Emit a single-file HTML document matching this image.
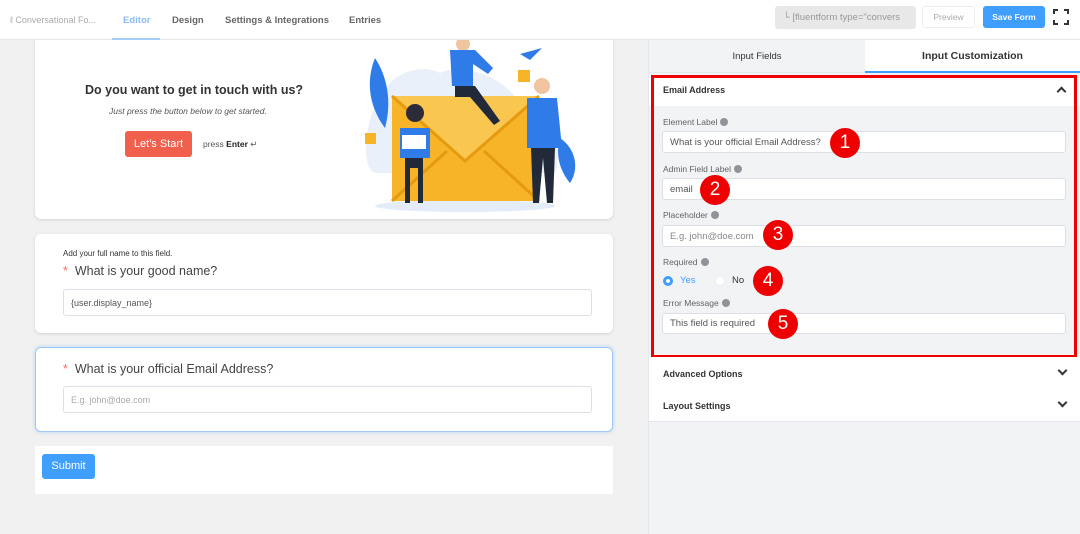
<!DOCTYPE html>
<html><head><style>
*{box-sizing:border-box;margin:0;padding:0}
body{width:1080px;height:534px;overflow:hidden;font-family:"Liberation Sans",sans-serif;background:#f1f1f1;position:relative;color:#333}
.abs{position:absolute}
.top{left:0;top:0;width:1080px;height:40px;background:#fff;border-bottom:1px solid #e4e7ed}
.nav{top:15px;font-size:9.5px;font-weight:bold;color:#666}
.card{background:#fff;border-radius:6px;box-shadow:0 1px 3px rgba(0,0,0,.12)}
.inp{background:#fff;border:1px solid #dcdfe6;border-radius:3px;font-size:9.5px;color:#555;padding-left:7px;display:flex;align-items:center}
.lbl{font-size:8.5px;color:#606266;left:663px}
.i{display:inline-block;width:8px;height:8px;border-radius:50%;background:#909399;vertical-align:-1px;margin-left:3px}
.num{width:30px;height:30px;border-radius:50%;background:#e00;color:#fff;font-size:19px;text-align:center;line-height:30px}
.row{left:649px;width:431px;height:33px;background:#fff;border-bottom:1px solid #e4e7ed;font-size:9px;font-weight:bold;color:#333;padding:12px 0 0 14px}
.chev{position:absolute;right:14px;top:10px;width:7px;height:7px;border-right:2px solid #333;border-bottom:2px solid #333;transform:rotate(45deg)}
</style></head><body>
<div class="abs card" style="left:35px;top:30px;width:578px;height:189px;border-radius:0 0 6px 6px"></div>
<div class="abs top"></div>
<div class="abs" style="left:10px;top:15px;font-size:9px;color:#aaa">&#x2113; Conversational Fo...</div>
<div class="abs nav" style="left:123px;color:#8bbcf0">Editor</div>
<div class="abs" style="left:112px;top:38px;width:48px;height:2px;background:#a6cdf5"></div>
<div class="abs nav" style="left:172px">Design</div>
<div class="abs nav" style="left:225px">Settings &amp; Integrations</div>
<div class="abs nav" style="left:349px">Entries</div>
<div class="abs" style="left:775px;top:6px;width:141px;height:23px;background:#e8e8e8;border-radius:3px;font-size:9.5px;color:#999;padding:6px 0 0 8px;white-space:nowrap;overflow:hidden">&#x2514; [fluentform type="convers</div>
<div class="abs" style="left:922px;top:6px;width:53px;height:22px;border:1px solid #eee;border-radius:3px;font-size:8.5px;color:#aaa;text-align:center;line-height:20px">Preview</div>
<div class="abs" style="left:983px;top:6px;width:62px;height:22px;background:#409eff;border-radius:3px;font-size:8.5px;font-weight:bold;color:#fff;text-align:center;line-height:22px">Save Form</div>
<svg class="abs" style="left:1053px;top:9px" width="16" height="16" viewBox="0 0 16 16" fill="none" stroke="#333" stroke-width="2"><path d="M1 5V1h4M11 1h4v4M15 11v4h-4M5 15H1v-4"/></svg>

<div class="abs" style="left:85px;top:83px;font-size:12.5px;font-weight:bold;color:#333">Do you want to get in touch with us?</div>
<div class="abs" style="left:109px;top:106px;font-size:8.5px;font-style:italic;color:#555">Just press the button below to get started.</div>
<div class="abs" style="left:125px;top:131px;width:67px;height:26px;background:#f0604d;border-radius:3px;color:#fff;font-size:11px;text-align:center;line-height:26px">Let's Start</div>
<div class="abs" style="left:203px;top:139px;font-size:8.5px;color:#555">press <b style="color:#222">Enter</b> &#x21B5;</div>
<svg class="abs" style="left:355px;top:40px" width="235" height="175" viewBox="0 2 235 175">
<ellipse cx="110" cy="168" rx="90" ry="6" fill="#e3ecf8"/>
<path d="M25 60c10-25 40-35 60-25 20-10 60 0 80 30 30 5 45 40 35 70H20C5 130 10 80 25 60z" fill="#e9f0fa"/>
<path d="M20 20c10 15 18 40 10 70-15-20-20-45-10-70z" fill="#2f7ce8"/>
<path d="M205 100c15 10 20 30 10 45-10-12-15-28-10-45z" fill="#2f7ce8"/>
<rect x="37" y="58" width="147" height="105" fill="#f7b428"/>
<path d="M37 58l73 65 74-65" fill="#f9c650" stroke="#e59a10" stroke-width="3"/>
<path d="M37 163l55-50M184 163l-55-50" stroke="#e59a10" stroke-width="3"/>
<circle cx="60" cy="75" r="9" fill="#2b2b3a"/>
<path d="M45 90h30v30H45z" fill="#2f7ce8"/><rect x="47" y="97" width="24" height="14" fill="#fff"/>
<path d="M50 120h18v45h-5v-35h-8v35h-5z" fill="#222a3a"/>
<circle cx="108" cy="6" r="7" fill="#f0c4a0"/>
<path d="M95 12h25l18 18-5 6-15-10v22H97z" fill="#2f7ce8"/>
<path d="M100 48h20l25 35-6 4-24-28-15 0z" fill="#222a3a"/>
<circle cx="187" cy="48" r="8" fill="#f0c4a0"/>
<path d="M172 60h30l5 50h-35z" fill="#2f7ce8"/>
<path d="M176 110h24l-2 55h-6l-4-45-4 45h-6z" fill="#222a3a"/>
<path d="M165 16l22-6-12 12z" fill="#2f7ce8"/>
<rect x="163" y="32" width="12" height="12" fill="#f7b428"/>
<rect x="10" y="95" width="11" height="11" fill="#f7b428"/>
</svg>

<div class="abs card" style="left:35px;top:234px;width:578px;height:99px"></div>
<div class="abs" style="left:63px;top:249px;font-size:8px;color:#333">Add your full name to this field.</div>
<div class="abs" style="left:63px;top:264px;font-size:12.5px;color:#444"><span style="color:#f56c6c">*</span>&nbsp; What is your good name?</div>
<div class="abs inp" style="left:63px;top:289px;width:529px;height:27px;font-size:9px">{user.display_name}</div>

<div class="abs card" style="left:35px;top:347px;width:578px;height:85px;border:1.5px solid #a0c8f5;box-shadow:0 0 4px rgba(64,158,255,.35)"></div>
<div class="abs" style="left:63px;top:362px;font-size:12.5px;color:#444"><span style="color:#f56c6c">*</span>&nbsp; What is your official Email Address?</div>
<div class="abs inp" style="left:63px;top:386px;width:529px;height:27px;font-size:9px;color:#aaa">E.g. john@doe.com</div>

<div class="abs" style="left:35px;top:446px;width:578px;height:48px;background:#fff"></div>
<div class="abs" style="left:42px;top:454px;width:53px;height:25px;background:#409eff;border-radius:3px;color:#fff;font-size:11px;text-align:center;line-height:25px">Submit</div>

<div class="abs" style="left:648px;top:40px;width:432px;height:494px;background:#f2f3f5;border-left:1px solid #e4e7ed"></div>
<div class="abs" style="left:649px;top:40px;width:216px;height:33px;font-size:9.5px;color:#333;text-align:center;line-height:33px;border-bottom:1px solid #e4e7ed">Input Fields</div>
<div class="abs" style="left:865px;top:40px;width:215px;height:33px;background:#fff;font-size:10.5px;font-weight:bold;color:#333;text-align:center;line-height:32px;border-bottom:2px solid #409eff">Input Customization</div>
<div class="abs" style="left:649px;top:75px;width:431px;height:31px;background:#fff;font-size:9px;font-weight:bold;padding:10px 0 0 14px">Email Address</div>
<div class="abs" style="left:1058px;top:88px;width:7px;height:7px;border-left:2px solid #333;border-top:2px solid #333;transform:rotate(45deg)"></div>
<div class="abs lbl" style="top:117px">Element Label<span class="i"></span></div>
<div class="abs inp" style="left:662px;top:131px;width:404px;height:22px">What is your official Email Address?</div>
<div class="abs lbl" style="top:164px">Admin Field Label<span class="i"></span></div>
<div class="abs inp" style="left:662px;top:178px;width:404px;height:22px">email</div>
<div class="abs lbl" style="top:210px">Placeholder<span class="i"></span></div>
<div class="abs inp" style="left:662px;top:225px;width:404px;height:22px;color:#888">E.g. john@doe.com</div>
<div class="abs lbl" style="top:257px">Required<span class="i"></span></div>
<div class="abs" style="left:663px;top:276px;width:10px;height:10px;border-radius:50%;background:#409eff;border:3px solid #409eff;box-shadow:inset 0 0 0 2px #fff"></div>
<div class="abs" style="left:680px;top:275px;font-size:9.5px;color:#409eff">Yes</div>
<div class="abs" style="left:715px;top:276px;width:10px;height:10px;border-radius:50%;background:#fff;border:1px solid #eee"></div>
<div class="abs" style="left:732px;top:275px;font-size:9.5px;color:#333">No</div>
<div class="abs lbl" style="top:298px">Error Message<span class="i"></span></div>
<div class="abs inp" style="left:662px;top:313px;width:404px;height:21px">This field is required</div>
<div class="abs num" style="left:830px;top:128px">1</div>
<div class="abs num" style="left:700px;top:175px">2</div>
<div class="abs num" style="left:763px;top:220px">3</div>
<div class="abs num" style="left:753px;top:266px">4</div>
<div class="abs num" style="left:768px;top:309px">5</div>
<div class="abs" style="left:651px;top:75px;width:426px;height:283px;border:3px solid #e00"></div>
<div class="abs row" style="top:357px">Advanced Options<span class="chev"></span></div>
<div class="abs row" style="top:389px">Layout Settings<span class="chev"></span></div>
</body></html>
